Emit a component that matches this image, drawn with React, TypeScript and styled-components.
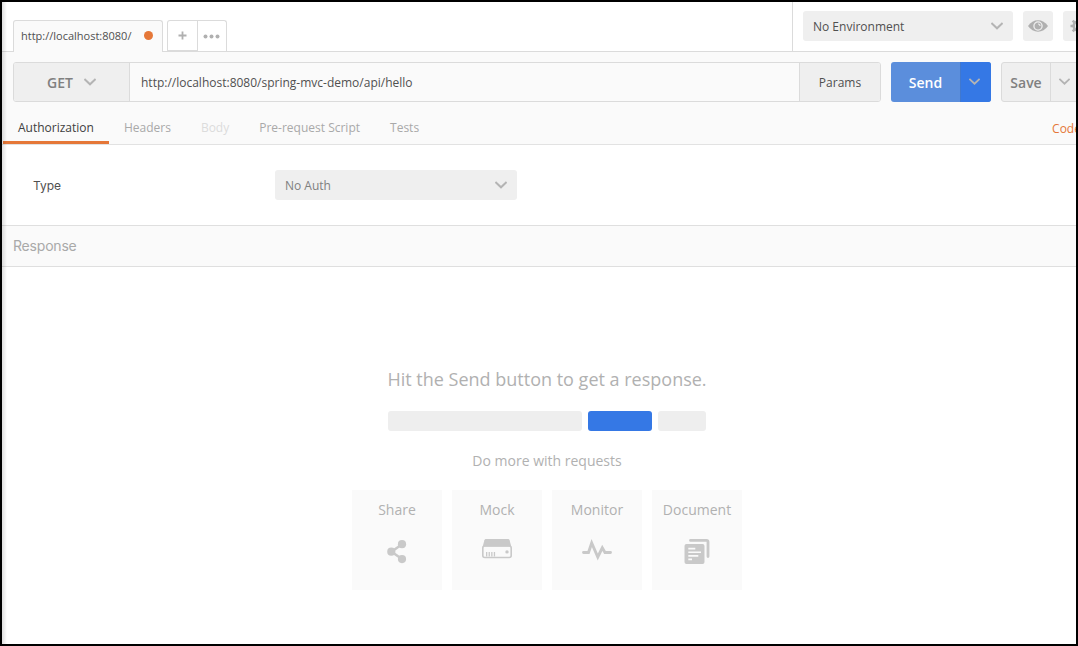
import React from "react";
import styled, { createGlobalStyle } from "styled-components";

const GlobalStyle = createGlobalStyle`
  *, *::before, *::after { box-sizing: border-box; }
  body { margin: 0; background: #fff; overflow: hidden; }
`;

const Window = styled.div`
  position: relative;
  display: flex;
  flex-direction: column;
  width: 1078px;
  height: 646px;
  border: 2px solid #000;
  background: #fff;
  overflow: hidden;
  white-space: nowrap;
  font-family: "Open Sans", sans-serif;
  font-size: 12px;
  color: #505050;
`;

const EdgeShadow = styled.div`
  position: absolute;
  z-index: 1;
  inset: 0 auto 0 0;
  width: 5px;
  background: linear-gradient(to right, rgba(0, 0, 0, 0.13), rgba(0, 0, 0, 0));
`;

const TopBar = styled.header`
  display: flex;
  flex: none;
  height: 50px;
  border-bottom: 1px solid #dbdbdb;
`;

const TabStrip = styled.div`
  display: flex;
  flex: none;
  align-items: flex-end;
  width: 791px;
  padding-left: 11px;
  border-right: 1px solid #dbdbdb;
`;

const RequestTab = styled.div`
  display: flex;
  align-items: center;
  justify-content: space-between;
  width: 150px;
  height: 32px;
  margin-bottom: -1px;
  padding: 0 9px 2px 7px;
  border: 1px solid #dbdbdb;
  border-bottom: 0;
  border-radius: 3px 3px 0 0;
  background: #fafafa;
  font-size: 11px;
`;

const UnsavedDot = styled.span`
  width: 9px;
  height: 9px;
  border-radius: 50%;
  background: #e57738;
`;

const TabActions = styled.div`
  display: flex;
  width: 60px;
  height: 31px;
  margin-left: 4px;
  border: 1px solid #dbdbdb;
  border-bottom: 0;
  border-radius: 3px 3px 0 0;
`;

const TabAction = styled.div`
  display: flex;
  flex: 1;
  align-items: center;
  justify-content: center;
  height: 30px;
  border-bottom: 1px solid #dbdbdb;
  & + & { border-left: 1px solid #dbdbdb; border-bottom: 0; }
`;

const Environment = styled.div`
  display: flex;
  flex: none;
  gap: 10px;
  padding: 9px 0 0 10px;
`;

const Select = styled.div<{ $width: number; $color?: string }>`
  display: flex;
  align-items: center;
  justify-content: space-between;
  width: ${(p) => p.$width}px;
  height: 30px;
  padding: 0 10px;
  border-radius: 3px;
  background: #efefef;
  color: ${(p) => p.$color ?? "#505050"};
`;

const IconButton = styled.div`
  display: flex;
  flex: none;
  align-items: center;
  justify-content: center;
  width: 30px;
  height: 30px;
  border-radius: 3px;
  background: #efefef;
`;

const RequestPanel = styled.section`
  flex: none;
  height: 93px;
  border-bottom: 1px solid #e2e2e2;
  background: #fafafa;
`;

const RequestLine = styled.div`
  display: flex;
  gap: 10px;
  padding: 10px 0 0 11px;
`;

const UrlGroup = styled.div`
  display: flex;
  flex: none;
  width: 868px;
  height: 40px;
  border: 1px solid #dbdbdb;
  border-radius: 3px;
  overflow: hidden;
`;

const Method = styled.div`
  display: flex;
  align-items: center;
  justify-content: center;
  gap: 11px;
  width: 116px;
  border-right: 1px solid #dbdbdb;
  background: #efefef;
  color: #808080;
  font-size: 14px;
  font-weight: 600;
`;

const Url = styled.div`
  flex: 1;
  padding-left: 11px;
  line-height: 40px;
`;

const Params = styled.div`
  width: 81px;
  border-left: 1px solid #dbdbdb;
  background: #efefef;
  line-height: 40px;
  text-align: center;
`;

const SplitButton = styled.div<{ $primary?: boolean }>`
  display: flex;
  flex: none;
  width: ${(p) => (p.$primary ? 100 : 80)}px;
  height: 40px;
  border: ${(p) => (p.$primary ? "0" : "1px solid #dbdbdb")};
  border-radius: 3px;
  overflow: hidden;
  background: ${(p) => (p.$primary ? "#5b8edc" : "#efefef")};
  color: ${(p) => (p.$primary ? "#fff" : "#808080")};
  font-size: 14px;
  font-weight: 600;
`;

const ButtonLabel = styled.div<{ $width: number }>`
  display: flex;
  align-items: center;
  justify-content: center;
  width: ${(p) => p.$width}px;
`;

const ButtonArrow = styled.div<{ $primary?: boolean }>`
  display: flex;
  align-items: center;
  flex: 1;
  padding-left: 8px;
  border-left: 1px solid ${(p) => (p.$primary ? "#4078cf" : "#dbdbdb")};
  background: ${(p) => (p.$primary ? "#3578e5" : "transparent")};
`;

const SubTabs = styled.nav`
  display: flex;
  height: 42px;
  padding-left: 1px;
`;

const SubTab = styled.div<{ $active?: boolean; $disabled?: boolean }>`
  height: 42px;
  padding: 0 15px;
  border-bottom: 3px solid ${(p) => (p.$active ? "#e57738" : "transparent")};
  color: ${(p) => (p.$active ? "#404040" : p.$disabled ? "#dcdcdc" : "#a9a9a9")};
  line-height: 51px;
`;

const CodeLink = styled.div`
  margin-left: 618px;
  color: #e57738;
  line-height: 54px;
`;

const AuthPanel = styled.section`
  display: flex;
  align-items: center;
  flex: none;
  height: 80px;
  padding-left: 31px;
`;

const FieldLabel = styled.div`
  width: 242px;
  font-family: Inter, sans-serif;
`;

const ResponseBar = styled.div`
  flex: none;
  height: 42px;
  padding-left: 11px;
  border: solid #dfdfdf;
  border-width: 1px 0;
  background: #fafafa;
  color: #a9a9a9;
  font-family: Inter, sans-serif;
  font-size: 14px;
  letter-spacing: -0.2px;
  line-height: 39px;
`;

const EmptyState = styled.main`
  display: flex;
  flex-direction: column;
  align-items: center;
  flex: 1;
  padding: 99px 0 0 16px;
  color: #b1b1b1;
`;

const Headline = styled.div`
  height: 45px;
  font-size: 18px;
  line-height: 26px;
`;

const Blocks = styled.div`
  display: flex;
  gap: 6px;
`;

const Block = styled.span<{ $width: number; $primary?: boolean }>`
  width: ${(p) => p.$width}px;
  height: 20px;
  border-radius: 3px;
  background: ${(p) => (p.$primary ? "#3578e5" : "#eee")};
`;

const Caption = styled.div`
  height: 59px;
  padding-top: 20px;
  font-size: 14px;
  line-height: 20px;
`;

const Cards = styled.div`
  display: flex;
  gap: 10px;
`;

const Card = styled.div`
  display: flex;
  flex-direction: column;
  align-items: center;
  width: 90px;
  height: 100px;
  padding-top: 10px;
  background: #fafafa;
  font-size: 14px;
  line-height: 20px;
`;

const CardIcon = styled.svg`
  width: 32px;
  height: 28px;
  margin-top: 17px;
  fill: #c9c9c9;
`;

const Chevron = ({ width = 12, color = "#b4b4b4" }: { width?: number; color?: string }) => (
  <svg width={width} height={(width * 8) / 12} viewBox="0 0 12 8" fill="none" stroke={color} strokeWidth="2">
    <path d="M.4 1 6 6.3 11.6 1" />
  </svg>
);

const cards = [
  {
    label: "Share",
    icon: (
      <>
        <path d="M21 7.200 10.500 14.700 21 22" fill="none" stroke="#c9c9c9" strokeWidth="2.500" />
        <circle cx="21" cy="7.200" r="4.100" />
        <circle cx="10.300" cy="14.700" r="4.100" />
        <circle cx="21" cy="22.100" r="4.100" />
      </>
    ),
  },
  {
    label: "Mock",
    icon: (
      <>
        <path d="M5.200 2h21.600c1 0 1.500.4 1.800 1.300L30.300 9.500H1.700l1.700-6.200C3.700 2.400 4.200 2 5.200 2Z" />
        <rect x="1.800" y="9" width="28.400" height="11.500" rx="2" fill="none" stroke="#c9c9c9" strokeWidth="1.600" />
        <path d="M5 15h1.300v4.500H5zM7.600 15h1.300v4.500H7.600zM10.200 15h1.300v4.500h-1.300zM12.800 15h1.300v4.500h-1.300z" />
        <circle cx="26" cy="14.900" r="1.700" />
      </>
    ),
  },
  {
    label: "Monitor",
    icon: (
      <path
        d="M2.500 15.500H7.500L10.700 6 16.800 20 21.300 10.800 24 15.500H29.500"
        fill="none"
        stroke="#c9c9c9"
        strokeWidth="2.900"
        strokeLinecap="round"
      />
    ),
  },
  {
    label: "Document",
    icon: (
      <>
        <path d="M9.500 3.400H25.500Q27 3.400 27 5V19.500" fill="none" stroke="#c9c9c9" strokeWidth="2.800" strokeLinecap="round" />
        <path
          fillRule="evenodd"
          d="M5.500 7h16q2 0 2 2v16q0 2-2 2h-16q-2 0-2-2V9q0-2 2-2ZM7.300 10.800v1.700h7v-1.700ZM7.300 14.400v1.700h12.700v-1.700ZM7.300 18v1.700h10v-1.700ZM7.300 21.600v1.700h3.700v-1.700Z"
        />
      </>
    ),
  },
];

export default function App() {
  return (
    <>
      <GlobalStyle />
      <Window>
        <EdgeShadow />
        <TopBar>
          <TabStrip>
            <RequestTab>
              http://localhost:8080/
              <UnsavedDot />
            </RequestTab>
            <TabActions>
              <TabAction>
                <svg width="9" height="9" viewBox="0 0 9 9" stroke="#b0b0b0" strokeWidth="1.800">
                  <path d="M4.500 .5v8M.5 4.500h8" />
                </svg>
              </TabAction>
              <TabAction>
                <svg width="17" height="5" viewBox="0 0 17 5" fill="#b0b0b0">
                  <circle cx="2.500" cy="2.500" r="2" />
                  <circle cx="8.500" cy="2.500" r="2" />
                  <circle cx="14.500" cy="2.500" r="2" />
                </svg>
              </TabAction>
            </TabActions>
          </TabStrip>
          <Environment>
            <Select $width={210}>
              No Environment
              <Chevron />
            </Select>
            <IconButton>
              <svg width="20" height="12" viewBox="0 0 20 12">
                <path d="M0 6Q4 .3 10 .3T20 6Q16 11.700 10 11.700T0 6Z" fill="#b0b0b0" />
                <circle cx="10" cy="6" r="4.100" fill="none" stroke="#efefef" strokeWidth="1.300" />
                <path d="M10 4a2 2 0 0 1 2 2" fill="none" stroke="#efefef" strokeWidth="1.100" />
              </svg>
            </IconButton>
            <IconButton>
              <svg width="18" height="16" viewBox="0 0 18 16" fill="none" stroke="#b0b0b0">
                <circle cx="9" cy="8" r="4.300" strokeWidth="2.600" />
                <path d="M9 .5v3M9 12.500v3M1.500 8h3M13.500 8h3M3.700 2.700l2 2M12.300 11.300l2 2M3.700 13.300l2-2M12.300 4.700l2-2" strokeWidth="2.600" />
              </svg>
            </IconButton>
          </Environment>
        </TopBar>
        <RequestPanel>
          <RequestLine>
            <UrlGroup>
              <Method>
                GET
                <Chevron />
              </Method>
              <Url>http://localhost:8080/spring-mvc-demo/api/hello</Url>
              <Params>Params</Params>
            </UrlGroup>
            <SplitButton $primary>
              <ButtonLabel $width={69}>Send</ButtonLabel>
              <ButtonArrow $primary>
                <Chevron width={11} />
              </ButtonArrow>
            </SplitButton>
            <SplitButton>
              <ButtonLabel $width={48}>Save</ButtonLabel>
              <ButtonArrow>
                <Chevron width={11} />
              </ButtonArrow>
            </SplitButton>
          </RequestLine>
          <SubTabs>
            <SubTab $active>Authorization</SubTab>
            <SubTab>Headers</SubTab>
            <SubTab $disabled>Body</SubTab>
            <SubTab>Pre-request Script</SubTab>
            <SubTab>Tests</SubTab>
            <CodeLink>Code</CodeLink>
          </SubTabs>
        </RequestPanel>
        <AuthPanel>
          <FieldLabel>Type</FieldLabel>
          <Select $width={242} $color="#808080">
            No Auth
            <Chevron />
          </Select>
        </AuthPanel>
        <ResponseBar>Response</ResponseBar>
        <EmptyState>
          <Headline>Hit the Send button to get a response.</Headline>
          <Blocks>
            <Block $width={194} />
            <Block $width={64} $primary />
            <Block $width={48} />
          </Blocks>
          <Caption>Do more with requests</Caption>
          <Cards>
            {cards.map((card) => (
              <Card key={card.label}>
                {card.label}
                <CardIcon viewBox="0 0 32 28">{card.icon}</CardIcon>
              </Card>
            ))}
          </Cards>
        </EmptyState>
      </Window>
    </>
  );
}
